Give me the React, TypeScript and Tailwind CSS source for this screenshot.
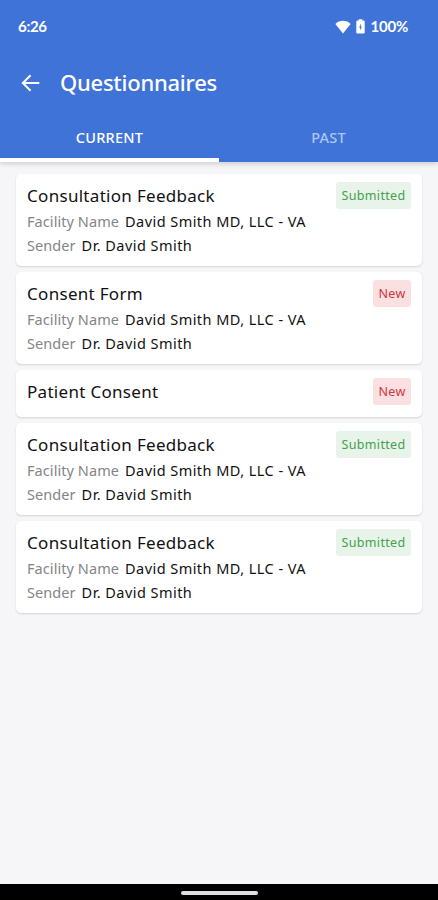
import React, { useState } from 'react';
import clsx from 'clsx';

type Status = 'submitted' | 'new';

interface Questionnaire {
  id: number;
  title: string;
  facility?: string;
  sender?: string;
  status: Status;
}

const questionnaires: Questionnaire[] = [
  { id: 1, title: 'Consultation Feedback', facility: 'David Smith MD, LLC - VA', sender: 'Dr. David Smith', status: 'submitted' },
  { id: 2, title: 'Consent Form', facility: 'David Smith MD, LLC - VA', sender: 'Dr. David Smith', status: 'new' },
  { id: 3, title: 'Patient Consent', status: 'new' },
  { id: 4, title: 'Consultation Feedback', facility: 'David Smith MD, LLC - VA', sender: 'Dr. David Smith', status: 'submitted' },
  { id: 5, title: 'Consultation Feedback', facility: 'David Smith MD, LLC - VA', sender: 'Dr. David Smith', status: 'submitted' },
];

const tabs = ['CURRENT', 'PAST'];

function StatusBar() {
  return (
    <div className="flex h-[52px] items-center justify-between pl-[18px] pr-[30px] pt-px font-['Lato',sans-serif] text-[15px] font-bold text-white">
      <span className="tracking-[-0.3px]">6:26</span>
      <div className="flex items-center">
        <svg width="16" height="14" viewBox="0 0 16 14" fill="currentColor">
          <path d="M0.4 3.9C2.4 1.9 5 0.8 8 0.8s5.6 1.1 7.6 3.1L8 13.4z" />
        </svg>
        <svg className="ml-[5px]" width="9" height="15" viewBox="0 0 9 15" fill="currentColor">
          <path fillRule="evenodd" d="M2.7 1.6V0.3h3.6v1.3H7.6A1.1 1.1 0 0 1 8.7 2.7v10.8a1.1 1.1 0 0 1-1.1 1.1H1.4a1.1 1.1 0 0 1-1.1-1.1V2.7a1.1 1.1 0 0 1 1.1-1.1zM4.9 4.6 3.2 8.6h1v3L5.9 7.8H4.9z" />
        </svg>
        <span className="ml-[5px] tracking-[-0.2px]">100%</span>
      </div>
    </div>
  );
}

function StatusBadge({ status }: { status: Status }) {
  return (
    <span
      className={clsx(
        'flex h-[27px] shrink-0 items-center justify-center rounded-[3px] pt-[2px] text-[12.5px] tracking-[0.35px]',
        status === 'submitted' ? 'w-[75px] bg-[#e8f4ea] text-[#43a04d]' : 'w-[38px] bg-[#fbe0e1] text-[#cf3640]',
      )}
    >
      {status === 'submitted' ? 'Submitted' : 'New'}
    </span>
  );
}

function Field({ label, value }: { label: string; value: string }) {
  return (
    <div className="flex h-6 items-center gap-1.5 whitespace-nowrap text-[14.5px]">
      <span className="tracking-[0.07px] text-[#858585]">{label}</span>
      <span className="tracking-[0.45px] text-[#111111]">{value}</span>
    </div>
  );
}

function QuestionnaireCard({ item }: { item: Questionnaire }) {
  return (
    <li className={clsx('rounded-[5px] bg-white px-[11px] pt-2 shadow-[0_1px_2px_rgba(0,0,0,0.14)]', item.facility ? 'h-[92px]' : 'h-[47px]')}>
      <div className="mb-px flex h-[27px] items-center justify-between">
        <h2 className="pt-px text-[17px] tracking-[0.3px] text-[#111111]">{item.title}</h2>
        <StatusBadge status={item.status} />
      </div>
      {item.facility && <Field label="Facility Name" value={item.facility} />}
      {item.sender && <Field label="Sender" value={item.sender} />}
    </li>
  );
}

export default function App() {
  const [activeTab, setActiveTab] = useState('CURRENT');

  return (
    <div className="flex h-[900px] w-full flex-col bg-[#f6f6f9] font-['Noto_Sans',sans-serif]">
      <header className="h-[162px] bg-[#3f73d8] shadow-[0_2px_5px_rgba(0,0,0,0.16)]">
        <StatusBar />
        <div className="flex h-[61px] items-center pl-[21px] text-white">
          <svg width="19" height="18" viewBox="0 0 19 18" fill="none" stroke="currentColor" strokeWidth="2">
            <path d="M18.3 9H2M9.6 1.2 1.8 9l7.8 7.8" />
          </svg>
          <h1 className="ml-5 text-[22px] font-medium tracking-[-0.25px]">Questionnaires</h1>
        </div>
        <div className="flex h-[49px]">
          {tabs.map(tab => (
            <button
              key={tab}
              onClick={() => setActiveTab(tab)}
              className={clsx(
                'flex-1 border-b-4 pt-[5px] text-[14.5px] font-medium tracking-[0.25px]',
                activeTab === tab ? 'border-white text-white' : 'border-transparent text-[#adc5f2]',
              )}
            >
              {tab}
            </button>
          ))}
        </div>
      </header>

      <ul className="flex flex-1 flex-col gap-1.5 px-4 pt-3">
        {activeTab === 'CURRENT' && questionnaires.map(item => <QuestionnaireCard key={item.id} item={item} />)}
      </ul>

      <div className="flex h-4 items-center justify-center bg-black pt-0.5">
        <div className="h-1 w-[77px] rounded-full bg-[#dedede]" />
      </div>
    </div>
  );
}
